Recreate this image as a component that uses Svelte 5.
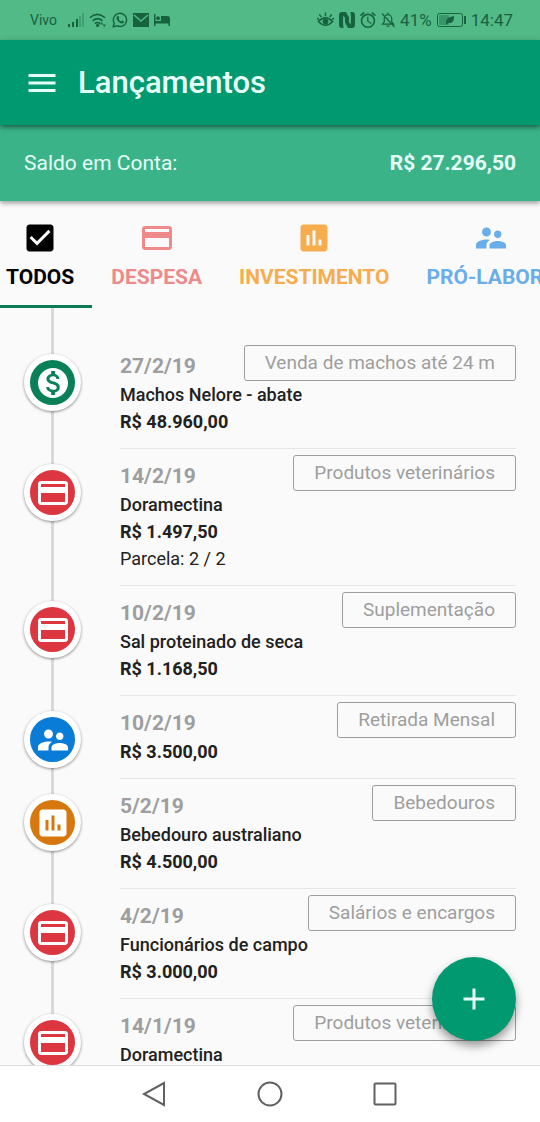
<script>
    const icons = {
        all: 'M19 3H5c-1.11 0-2 .9-2 2v14c0 1.1.89 2 2 2h14c1.11 0 2-.9 2-2V5c0-1.1-.89-2-2-2zm-9 14l-5-5 1.41-1.41L10 14.17l7.59-7.59L19 8l-9 9z',
        expense: 'M20 4H4c-1.11 0-1.99.89-1.99 2L2 18c0 1.11.89 2 2 2h16c1.11 0 2-.89 2-2V6c0-1.11-.89-2-2-2zm0 14H4v-6h16v6zm0-10H4V6h16v2z',
        investment: 'M19 3H5c-1.1 0-2 .9-2 2v14c0 1.1.9 2 2 2h14c1.1 0 2-.9 2-2V5c0-1.1-.9-2-2-2zM9 17H7v-7h2v7zm4 0h-2V7h2v10zm4 0h-2v-4h2v4z',
        labor: 'M16.5 12c1.38 0 2.49-1.12 2.49-2.5S17.88 7 16.5 7C15.12 7 14 8.12 14 9.5s1.12 2.5 2.5 2.5zM9 11c1.66 0 2.99-1.34 2.99-3S10.66 5 9 5C7.34 5 6 6.34 6 8s1.34 3 3 3zm7.5 3c-1.83 0-5.5.92-5.5 2.75V19h11v-2.25c0-1.83-3.67-2.75-5.5-2.75zM9 13c-2.33 0-7 1.17-7 3.5V19h7v-2.25c0-.85.33-2.34 2.37-3.47C10.5 13.1 9.66 13 9 13z',
        income: 'M12 2C6.48 2 2 6.48 2 12s4.48 10 10 10 10-4.48 10-10S17.52 2 12 2zm1.41 16.09V20h-2.67v-1.93c-1.71-.36-3.16-1.46-3.27-3.4h1.96c.1 1.05.82 1.87 2.65 1.87 1.96 0 2.4-.98 2.4-1.59 0-.83-.44-1.61-2.67-2.14-2.48-.6-4.18-1.62-4.18-3.67 0-1.72 1.39-2.84 3.11-3.21V4h2.67v1.95c1.86.45 2.79 1.86 2.85 3.39H14.3c-.05-1.11-.64-1.87-2.22-1.87-1.5 0-2.4.68-2.4 1.64 0 .84.65 1.39 2.67 1.91s4.18 1.39 4.18 3.91c-.01 1.83-1.38 2.83-3.12 3.16z'
    };

    const tabs = [
        { type: 'all', label: 'TODOS' },
        { type: 'expense', label: 'DESPESA' },
        { type: 'investment', label: 'INVESTIMENTO' },
        { type: 'labor', label: 'PRÓ-LABORE' }
    ];

    const entries = [
        { type: 'income', date: '27/2/19', category: 'Venda de machos até 24 m', name: 'Machos Nelore - abate', value: 'R$ 48.960,00' },
        { type: 'expense', date: '14/2/19', category: 'Produtos veterinários', name: 'Doramectina', value: 'R$ 1.497,50', installment: '2 / 2' },
        { type: 'expense', date: '10/2/19', category: 'Suplementação', name: 'Sal proteinado de seca', value: 'R$ 1.168,50' },
        { type: 'labor', date: '10/2/19', category: 'Retirada Mensal', value: 'R$ 3.500,00' },
        { type: 'investment', date: '5/2/19', category: 'Bebedouros', name: 'Bebedouro australiano', value: 'R$ 4.500,00' },
        { type: 'expense', date: '4/2/19', category: 'Salários e encargos', name: 'Funcionários de campo', value: 'R$ 3.000,00' },
        { type: 'expense', date: '14/1/19', category: 'Produtos veterinários', name: 'Doramectina' }
    ];

    let active = $state('all');
    let shown = $derived(active === 'all' ? entries : entries.filter((e) => e.type === active));
</script>

<div class="screen">
    <div class="status">
        <div class="status-left">
            <span class="carrier">Vivo</span>
            <svg width="16" height="16" viewBox="0 0 16 16">
                <path d="M0 12h2v3H0zM4 10h2v5H4zM8 7h2v8H8z" />
                <path d="M11 4h2v11h-2zM14 1h2v14h-2z" opacity=".3" />
            </svg>
            <svg width="18" height="16" viewBox="0 0 20 16">
                <g fill="none" stroke="currentColor" stroke-width="1.8">
                    <path d="M1 5.5Q9 -2 18 5.5M4 9Q9.500 4 15 9M6.500 12Q9.500 9.500 12.500 12" />
                </g>
                <circle cx="9.500" cy="14" r="1.700" />
                <path d="M14 10l2 3h-4zM17 16l-2-3h4z" opacity=".8" />
            </svg>
            <svg width="16" height="16" viewBox="0 0 17 17">
                <path d="M1.300 15.700l1-4a7 7 0 1 1 2.900 2.900z" fill="none" stroke="currentColor" stroke-width="1.500" />
                <path d="M5.500 4.500l1.200-.3 1.100 2.300-.8 1c.7 1.300 1.500 2 2.700 2.500l1-1 2 1.100c0 1.500-1.300 2.200-2.400 2C7.500 11.600 5.200 9.200 4.800 6.600c0-.9.2-1.600.7-2.100z" />
            </svg>
            <svg width="16" height="14" viewBox="0 0 16 14">
                <path d="M0 0h16v14H0z" />
                <path d="M1 2l7 6 7-6" fill="none" stroke="#52ba87" stroke-width="1.500" />
            </svg>
            <svg width="16" height="12" viewBox="0 0 16 12">
                <path d="M0 0h1.500v7H7V2h6.500Q16 2 16 4.500V12h-1.500V9.500h-13V12H0z" />
                <circle cx="4" cy="4.200" r="1.900" />
            </svg>
        </div>
        <div class="status-right">
            <svg width="17" height="16" viewBox="0 0 18 16">
                <path d="M1.500 9.500Q9 1.500 16.500 9.500Q9 17.500 1.500 9.500zM9 4V0M4.500 5L2.500 2M13.500 5l2-3M2 7.500L0 6M16 7.500L18 6" fill="none" stroke="currentColor" stroke-width="1.600" />
                <circle cx="9" cy="9.500" r="3" />
            </svg>
            <svg width="16" height="16" viewBox="0 0 16 16">
                <path d="M3 0Q0 0 0 3v10q0 3 3 3h1.500Q3.500 8 4.500 3.500L10 12V5.500L7 0zM13 16q3 0 3-3V3q0-3-3-3h-1.500Q12.500 8 11.500 12.500L6 4v6.500L9 16z" />
            </svg>
            <svg width="16" height="16" viewBox="2 2 20 20">
                <path d="M22 5.720l-4.600-3.860-1.290 1.530 4.600 3.860L22 5.720zM7.880 3.390L6.600 1.860 2 5.710l1.290 1.530 4.590-3.850zM12.500 8H11v6l4.750 2.850.75-1.230-4-2.370V8zM12 4c-4.970 0-9 4.030-9 9s4.020 9 9 9c4.970 0 9-4.030 9-9s-4.030-9-9-9zm0 16c-3.870 0-7-3.130-7-7s3.130-7 7-7 7 3.130 7 7-3.130 7-7 7z" />
            </svg>
            <svg width="14" height="16" viewBox="0 0 15 16">
                <path d="M1.500 12.500h12L11.500 10V6.500a4 4.200 0 0 0-8 0V10zM6 14.500h3M7.500 2.500V0M1 1l13.500 14.500" fill="none" stroke="currentColor" stroke-width="1.300" />
            </svg>
            <span class="battery-level">41%</span>
            <svg width="29" height="14" viewBox="0 0 29 14">
                <rect x=".5" y=".5" width="25" height="13" rx="2" fill="none" stroke="currentColor" />
                <path d="M2 2h10v10H2z" opacity=".4" />
                <path d="M9 11q-1-7 8-8 .5 8-6 7l-1 1.500z" />
                <path d="M27 3h2v8h-2z" />
            </svg>
            <span class="clock">14:47</span>
        </div>
    </div>

    <header>
        <button class="menu" aria-label="Menu">
            <svg width="36" height="36" viewBox="0 0 24 24"><path d="M3 18h18v-2H3v2zm0-5h18v-2H3v2zm0-7v2h18V6H3z" /></svg>
        </button>
        <h1>Lançamentos</h1>
    </header>

    <div class="balance">
        <span>Saldo em Conta:</span>
        <strong>R$ 27.296,50</strong>
    </div>

    <nav class="tabs">
        {#each tabs as tab}
            <button class="tab {tab.type}" class:active={active === tab.type} onclick={() => (active = tab.type)}>
                <svg width="36" height="36" viewBox="0 0 24 24"><path d={icons[tab.type]} /></svg>
                <span>{tab.label}</span>
            </button>
        {/each}
    </nav>

    <main>
        <ul class="timeline">
            {#each shown as entry}
                <li>
                    <div class="rail">
                        <div class="dot {entry.type}">
                            <svg width="36" height="36" viewBox="0 0 24 24"><path d={icons[entry.type]} /></svg>
                        </div>
                    </div>
                    <div class="entry">
                        <div class="entry-head">
                            <span class="date">{entry.date}</span>
                            <span class="chip">{entry.category}</span>
                        </div>
                        {#if entry.name}
                            <div class="name">{entry.name}</div>
                        {/if}
                        {#if entry.value}
                            <div class="value">{entry.value}</div>
                        {/if}
                        {#if entry.installment}
                            <div class="installment">Parcela: {entry.installment}</div>
                        {/if}
                    </div>
                </li>
            {/each}
        </ul>
        <button class="fab" aria-label="Adicionar">
            <svg width="36" height="36" viewBox="0 0 24 24"><path d="M19 13h-6v6h-2v-6H5v-2h6V5h2v6h6v2z" /></svg>
        </button>
    </main>

    <footer>
        <button aria-label="Voltar">
            <svg width="28" height="28" viewBox="0 0 28 28"><path d="M23 3v22L3 14z" /></svg>
        </button>
        <button aria-label="Início">
            <svg width="28" height="28" viewBox="0 0 28 28"><circle cx="14" cy="14" r="11.500" /></svg>
        </button>
        <button aria-label="Recentes">
            <svg width="28" height="28" viewBox="0 0 28 28"><rect x="3.500" y="3.500" width="21" height="21" rx="1" /></svg>
        </button>
    </footer>
</div>

<style>
    :global(body) {
        background: #fafafa;
    }

    .screen {
        display: flex;
        flex-direction: column;
        height: 100vh;
        overflow: hidden;
        font-family: Roboto, sans-serif;
        color: #212121;
    }

    svg {
        display: block;
        flex: none;
        fill: currentColor;
    }

    button {
        padding: 0;
        border: 0;
        background: none;
        color: inherit;
        font: inherit;
        cursor: pointer;
    }

    .status {
        display: flex;
        justify-content: space-between;
        align-items: center;
        flex: none;
        height: 40px;
        padding: 0 27px 0 30px;
        background: #52ba87;
        color: #17623f;
    }

    .status-left,
    .status-right {
        display: flex;
        align-items: center;
        gap: 5px;
    }

    .carrier {
        margin-right: 6px;
        font-size: 14px;
    }

    .battery-level,
    .clock {
        font-size: 17px;
    }

    header {
        display: flex;
        align-items: center;
        flex: none;
        gap: 18px;
        height: 85px;
        padding: 0 24px;
        background: #01996f;
        color: #e6fff8;
        box-shadow: 0 2px 5px rgba(0, 0, 0, 0.5);
        z-index: 2;
    }

    h1 {
        margin: 0;
        font-size: 31px;
        font-weight: 500;
    }

    .balance {
        display: flex;
        justify-content: space-between;
        align-items: center;
        flex: none;
        height: 76px;
        padding: 0 24px;
        background: #3ab389;
        color: #e6fff8;
        font-size: 21px;
        box-shadow: 0 2px 5px rgba(0, 0, 0, 0.4);
        z-index: 1;
    }

    .balance strong {
        font-weight: 700;
    }

    .tabs {
        display: flex;
        flex: none;
        height: 107px;
        margin-left: -13px;
        overflow: hidden;
    }

    .tab {
        display: flex;
        flex-direction: column;
        align-items: center;
        flex: none;
        gap: 9px;
        padding: 19px 18px 0 19px;
        border-bottom: 3px solid transparent;
        font-size: 21px;
        font-weight: 700;
        line-height: 24px;
    }

    .tab.active {
        border-color: #0b7a56;
    }

    .tab.all { color: #000; }
    .tab.expense { color: #ee8a8a; }
    .tab.investment { color: #f5ad4e; }
    .tab.labor { color: #69aee9; }

    main {
        position: relative;
        flex: 1;
        min-height: 0;
        overflow: hidden;
    }

    .timeline {
        margin: 0;
        padding: 0 24px;
        list-style: none;
    }

    li {
        display: flex;
        gap: 39px;
    }

    .rail {
        flex: none;
        width: 57px;
        padding-top: 15px;
        background: linear-gradient(#d9d9d9, #d9d9d9) center / 3px 100% no-repeat;
    }

    .dot {
        display: flex;
        justify-content: center;
        align-items: center;
        width: 45px;
        height: 45px;
        border: 6px solid #fff;
        border-radius: 50%;
        color: #fff;
        box-shadow: 0 1px 3px rgba(0, 0, 0, 0.45);
    }

    .dot.income { background: #0a8059; }
    .dot.expense { background: #dc3640; }
    .dot.labor { background: #087cd6; }
    .dot.investment { background: #d6780e; }

    .entry {
        flex: 1;
        min-width: 0;
        padding: 6px 0 13px;
        border-bottom: 1px solid #e6e6e6;
        font-size: 18px;
        line-height: 27px;
    }

    li:first-child .rail {
        padding-top: 46px;
    }

    li:first-child .entry {
        padding-top: 37px;
    }

    .entry-head {
        display: flex;
        justify-content: space-between;
        align-items: flex-start;
        height: 36px;
    }

    .date {
        padding-top: 8px;
        color: #9e9e9e;
        font-size: 21px;
        font-weight: 700;
    }

    .chip {
        padding: 0 20px;
        border: 1px solid #9e9e9e;
        border-radius: 3px;
        color: #9e9e9e;
        font-size: 19px;
        line-height: 34px;
    }

    .name {
        font-weight: 500;
    }

    .value {
        font-weight: 700;
    }

    .fab {
        display: flex;
        justify-content: center;
        align-items: center;
        position: absolute;
        right: 24px;
        bottom: 24px;
        width: 84px;
        height: 84px;
        border-radius: 50%;
        background: #01996f;
        color: #e6fff8;
        box-shadow: 0 5px 10px rgba(0, 0, 0, 0.4);
    }

    footer {
        display: flex;
        justify-content: center;
        align-items: center;
        flex: none;
        gap: 87px;
        height: 56px;
        border-top: 1px solid #dedede;
        background: #fff;
        color: #616161;
    }

    footer svg {
        fill: none;
        stroke: currentColor;
        stroke-width: 2;
    }
</style>
